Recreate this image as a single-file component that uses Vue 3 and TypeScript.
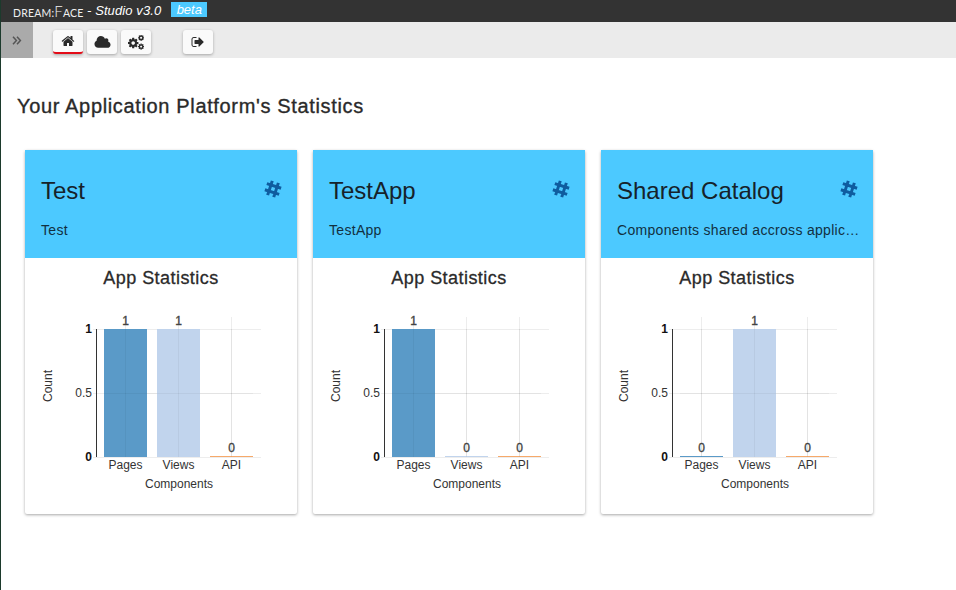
<script setup lang="ts">
interface AppCard {
  name: string;
  description: string;
  counts: number[];
}

const cogPath = 'M1152 896q0-106-75-181t-181-75-181 75-75 181 75 181 181 75 181-75 75-181zm512-109v222q0 12-8 23t-20 13l-185 28q-19 54-39 91 35 50 107 138 10 12 10 25t-9 23q-27 37-99 108t-94 71q-12 0-26-9l-138-108q-44 23-91 38-16 136-29 186-7 28-36 28h-222q-14 0-24.500-8.500t-11.500-21.500l-28-184q-49-16-90-37l-141 107q-10 9-25 9-14 0-25-11-126-114-165-168-7-10-7-23 0-12 8-23 15-21 51-66.500t54-70.500q-27-50-41-99l-183-27q-13-2-21-12.500t-8-23.500v-222q0-12 8-23t19-13l186-28q14-46 39-92-40-57-107-138-10-12-10-24 0-10 9-23 26-36 98.500-107.500t94.500-71.500q13 0 26 10l138 107q44-23 91-38 16-136 29-186 7-28 36-28h222q14 0 24.500 8.500t11.500 21.500l28 184q49 16 90 37l142-107q9-9 24-9 13 0 25 10 129 119 165 170 7 8 7 22 0 12-8 23-15 21-51 66.500t-54 70.500q26 50 41 98l183 28q13 2 21 12.500t8 23.500z'

const cards: AppCard[] = [
  { name: 'Test', description: 'Test', counts: [1, 1, 0] },
  { name: 'TestApp', description: 'TestApp', counts: [1, 0, 0] },
  { name: 'Shared Catalog', description: 'Components shared accross applic…', counts: [0, 1, 0] }
]

const series = [
  { label: 'Pages', x: 79, color: '#488fc2' },
  { label: 'Views', x: 132, color: '#bacfeb' },
  { label: 'API', x: 185, color: '#f5a05a' }
]

const yTicks = [
  { label: '1', y: 29, strong: true },
  { label: '0.5', y: 93, strong: false },
  { label: '0', y: 157, strong: true }
]

function barHeight(count: number) {
  return count > 0 ? 128 : 1
}
</script>

<template>
  <div class="studio">
    <div class="brand-bar">
      <span class="logo">DREAM<span class="logo-dot">:</span><span class="logo-f">F</span>ACE</span>
      <span class="version">- Studio v3.0</span>
      <span class="beta">beta</span>
    </div>

    <div class="toolbar">
      <div class="toggle">
        <svg width="10" height="9" viewBox="0 0 10 9">
          <path d="M1 .8 4.400 4.500 1 8.200M5 .8 8.400 4.500 5 8.200" fill="none" stroke="#555" stroke-width="1.500" />
        </svg>
      </div>
      <div class="tools">
        <button class="tool active">
          <svg width="14" height="14" viewBox="0 0 1792 1792">
            <path d="M1472 992v480q0 26-19 45t-45 19h-384v-384h-256v384h-384q-26 0-45-19t-19-45v-480q0-1 .5-3t.5-3l575-474 575 474q1 2 1 6zm223-69l-62 74q-8 9-21 11h-3q-13 0-21-7l-692-577-692 577q-12 8-24 7-13-2-21-11l-62-74q-8-10-7-23.500t11-21.500l719-599q32-26 76-26t76 26l244 204v-180q0-14 9-23t23-9h192q14 0 23 9t9 23v408l219 182q10 8 11 21.500t-7 23.500z" />
          </svg>
        </button>
        <button class="tool">
          <svg width="17" height="15" viewBox="0 0 1920 1792">
            <path d="M1920 1152q0 159-112.500 271.500t-271.500 112.500h-1088q-185 0-316.500-131.500t-131.500-316.500q0-132 71-241.500t187-163.500q-2-28-2-43 0-212 150-362t362-150q158 0 286.500 88t187.500 230q70-62 166-62 106 0 181 75t75 181q0 75-41 138 129 30 213 134.500t84 239.500z" />
          </svg>
        </button>
        <button class="tool">
          <svg width="16" height="15" viewBox="120 120 1680 1570">
            <path :d="cogPath" transform="translate(20 320) scale(.72)" />
            <path :d="cogPath" transform="translate(1120 40) scale(.42)" />
            <path :d="cogPath" transform="translate(1120 960) scale(.42)" />
          </svg>
        </button>
        <button class="tool exit">
          <svg width="14" height="14" viewBox="0 0 1792 1792">
            <path d="M704 1440q0 4 1 20t.5 26.500-3 23.500-10 19.500-20.500 6.500h-320q-119 0-203.500-84.500t-84.500-203.500v-704q0-119 84.500-203.500t203.500-84.500h320q13 0 22.500 9.500t9.500 22.500q0 4 1 20t.5 26.500-3 23.500-10 19.500-20.500 6.500h-320q-66 0-113 47t-47 113v704q0 66 47 113t113 47h312l11.500 1 11.500 3 8 5.500 7 9 2 13.500zm928-544q0 26-19 45l-544 544q-19 19-45 19t-45-19-19-45v-288h-448q-26 0-45-19t-19-45v-384q0-26 19-45t45-19h448v-288q0-26 19-45t45-19 45 19l544 544q19 19 19 45z" />
          </svg>
        </button>
      </div>
    </div>

    <main class="content">
      <h1>Your Application Platform's Statistics</h1>
      <div class="cards">
        <section v-for="card in cards" :key="card.name" class="card">
          <header class="card-head">
            <div class="card-title">
              <span>{{ card.name }}</span>
              <svg width="18" height="18" viewBox="0 0 18 18">
                <path
                  d="M1.500 5.800H16.500M1.500 12.200H16.500M5.800 1.500V16.500M12.200 1.500V16.500"
                  transform="rotate(18 9 9)"
                  stroke="#0f5c9f"
                  stroke-width="3"
                  fill="none"
                />
              </svg>
            </div>
            <p>{{ card.description }}</p>
          </header>
          <h2>App Statistics</h2>
          <svg class="chart" width="272" height="214" viewBox="0 0 272 214">
            <g v-for="t in yTicks" :key="t.label">
              <line x1="68" x2="236" :y1="t.y + .5" :y2="t.y + .5" stroke="#000" stroke-opacity=".07" />
              <text class="tick" :class="{ strong: t.strong }" x="67" :y="t.y + 4" text-anchor="end">{{ t.label }}</text>
            </g>
            <g v-for="(s, i) in series" :key="s.label">
              <line :x1="s.x + 21.500" :x2="s.x + 21.500" y1="17" y2="157" stroke="#000" stroke-opacity=".07" />
              <rect
                :x="s.x"
                :y="157 - barHeight(card.counts[i])"
                width="43"
                :height="barHeight(card.counts[i])"
                :fill="s.color"
                fill-opacity=".9"
              />
              <text class="value" :x="s.x + 21.500" :y="157 - barHeight(card.counts[i]) - 4" text-anchor="middle">
                {{ card.counts[i] }}
              </text>
              <text class="tick" :x="s.x + 21.500" y="169" text-anchor="middle">{{ s.label }}</text>
            </g>
            <!-- the grid shows faintly through the bars -->
            <path d="M79 93.500H228M100.500 29V157M153.500 29V157M206.500 29V157" stroke="#000" stroke-opacity=".04" fill="none" />
            <line x1="71.500" x2="71.500" y1="29" y2="157" stroke="#333" />
            <text class="tick" transform="translate(27 86) rotate(-90)" text-anchor="middle">Count</text>
            <text class="tick" x="154" y="188" text-anchor="middle">Components</text>
          </svg>
        </section>
      </div>
    </main>
  </div>
</template>

<style>
body {
  margin: 0;
  background: #fff;
}
</style>

<style scoped>
.studio {
  height: 590px;
  box-sizing: border-box;
  border-left: 1px solid #1c3a2c;
  font-family: "Liberation Sans", Arial, sans-serif;
  color: #222;
  overflow: hidden;
}
.brand-bar {
  height: 22px;
  padding-left: 12px;
  display: flex;
  align-items: center;
  background: #333;
  color: #fff;
}
.logo {
  width: 70px;
  font-family: Lato, sans-serif;
  font-size: 10.500px;
  letter-spacing: .2px;
  white-space: nowrap;
  color: #f0f0f0;
}
.logo-f {
  font-size: 15px;
  font-weight: 300;
}
.version {
  margin-left: 4px;
  font-style: italic;
  font-size: 13px;
  letter-spacing: .1px;
  padding-bottom: 2px;
}
.beta {
  margin-left: 10px;
  width: 36px;
  height: 15px;
  margin-top: -3px;
  background: #4cc9ff;
  font-style: italic;
  font-size: 13px;
  line-height: 15px;
  text-align: center;
}
.toolbar {
  height: 36px;
  display: flex;
  background: #ebebeb;
}
.toggle {
  width: 32px;
  display: flex;
  align-items: center;
  justify-content: center;
  box-sizing: border-box;
  background: #aaa;
}
.tools {
  display: flex;
  gap: 4px;
  padding: 8px 0 0 20px;
}
.tool {
  width: 30px;
  height: 24px;
  padding: 0;
  display: flex;
  align-items: center;
  justify-content: center;
  border: 0;
  border-radius: 3px;
  background: #fafafa;
  box-shadow: 0 1px 3px rgba(0, 0, 0, .3);
}
.tool svg {
  fill: #2a2a2a;
}
.tool.active {
  border-bottom: 2px solid #e30b17;
}
.tool.exit {
  margin-left: 28px;
}
.content {
  padding: 0 16px;
}
h1 {
  margin: 0;
  padding-top: 37px;
  font-size: 20px;
  line-height: 22px;
  letter-spacing: .65px;
  font-weight: 400;
  -webkit-text-stroke: .35px;
  color: #2a2a2a;
}
.cards {
  display: flex;
  gap: 16px;
  margin: 33px 0 0 8px;
}
.card {
  width: 272px;
  height: 364px;
  border-radius: 2px;
  background: #fff;
  box-shadow: 0 1px 3px rgba(0, 0, 0, .35);
}
.card-head {
  height: 108px;
  box-sizing: border-box;
  padding: 28px 15px 0 16px;
  background: #4cc9ff;
}
.card-title {
  display: flex;
  justify-content: space-between;
  font-size: 24px;
  line-height: 26px;
  color: #16222a;
}
.card-title svg {
  margin-top: 2px;
}
.card-head p {
  margin: 18px 0 0;
  font-size: 14px;
  line-height: 16px;
  letter-spacing: .3px;
  color: #12303f;
  white-space: nowrap;
}
h2 {
  margin: 0;
  height: 42px;
  padding-top: 9px;
  box-sizing: border-box;
  font-size: 18px;
  line-height: 22px;
  letter-spacing: .45px;
  font-weight: 400;
  -webkit-text-stroke: .3px;
  text-align: center;
  color: #2a2a2a;
}
.chart {
  display: block;
}
.tick {
  font-size: 12px;
  fill: #333;
}
.tick.strong {
  font-weight: 700;
  fill: #111;
}
.value {
  font-size: 12px;
  fill: #444;
  stroke: #444;
  stroke-width: .35;
}
</style>
